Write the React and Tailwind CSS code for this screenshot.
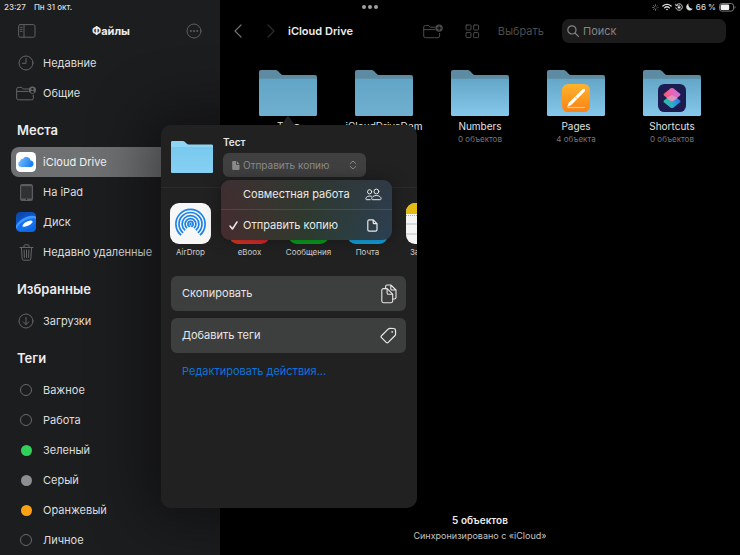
import React from "react";

const line = {
  fill: "none",
  stroke: "currentColor",
  strokeLinecap: "round",
  strokeLinejoin: "round",
  "aria-hidden": true,
};

function SidebarIcon() {
  return (
    <svg {...line} width="18" height="14" viewBox="0 0 18 14">
      <rect x="0.6" y="0.6" width="16.4" height="12.6" rx="1.600" />
      <path d="M6 0.6v12.6M2.200 3.300h2M2.200 5.300h2M2.200 7.300h2" />
    </svg>
  );
}

function MoreIcon() {
  return (
    <svg {...line} width="16" height="16" viewBox="0 0 16 16">
      <circle cx="8" cy="8" r="7" />
      <g fill="currentColor" stroke="none">
        <circle cx="4.8" cy="8" r="1" />
        <circle cx="8" cy="8" r="1" />
        <circle cx="11.2" cy="8" r="1" />
      </g>
    </svg>
  );
}

function ClockIcon() {
  return (
    <svg {...line} width="16" height="16" viewBox="0 0 16 16">
      <circle cx="8" cy="8" r="7" />
      <path d="M8 3.400V8.300H4.400" />
    </svg>
  );
}

function SharedFolderIcon() {
  return (
    <svg {...line} width="20" height="15" viewBox="0 0 20 15">
      <path d="M12.500 3H7.300L5.800 1.400H2.200A1.500 1.500 0 0 0 .7 2.900v9.300a1.600 1.600 0 0 0 1.600 1.600h13.400a1.600 1.600 0 0 0 1.600-1.600V9M.7 5.400h11.600" />
      <circle cx="16.400" cy="4.100" r="3.600" fill="currentColor" stroke="none" />
      <circle cx="16.400" cy="3.100" r="1.200" fill="#1c1d1f" stroke="none" />
      <path d="M14.300 6.100a2.200 1.600 0 0 1 4.200 0 3 3 0 0 1-4.200 0z" fill="#1c1d1f" stroke="none" />
    </svg>
  );
}

function CloudTile() {
  return (
    <svg width="20" height="20" viewBox="0 0 20 20" aria-hidden="true">
      <defs>
        <linearGradient id="cloud" x1="0" y1="0" x2="1" y2="0.3">
          <stop offset="0" stopColor="#7cc5fb" />
          <stop offset="1" stopColor="#1c7ff0" />
        </linearGradient>
      </defs>
      <rect width="20" height="20" rx="4.5" fill="#fff" />
      <path
        d="M5 15a3 3 0 0 1-.9-5.800A2.600 2.600 0 0 1 7 6.700 4.200 4.200 0 0 1 14.600 8.500 3.300 3.300 0 0 1 15 15z"
        fill="url(#cloud)"
      />
    </svg>
  );
}

function TabletIcon() {
  return (
    <svg width="13" height="17" viewBox="0 0 13 17" aria-hidden="true">
      <rect x="0.6" y="0.6" width="11.8" height="15.8" rx="1.6" fill="#303132" stroke="#5c5d5f" strokeWidth="1.2" />
      <path d="M1 1.500h11M1 15.300h11" stroke="#5c5d5f" strokeWidth="1.4" />
      <circle cx="6.5" cy="15.2" r="0.7" fill="#222" />
    </svg>
  );
}

function DiskTile() {
  return (
    <svg width="20" height="20" viewBox="0 0 20 20" aria-hidden="true">
      <defs>
        <linearGradient id="disk" x1="0" y1="0" x2="0.6" y2="1">
          <stop offset="0" stopColor="#0a44a8" />
          <stop offset="1" stopColor="#0b6ae6" />
        </linearGradient>
        <clipPath id="diskClip">
          <rect width="20" height="20" rx="4.500" />
        </clipPath>
      </defs>
      <g clipPath="url(#diskClip)">
        <rect width="20" height="20" fill="url(#disk)" />
        <ellipse cx="10.500" cy="11" rx="11.500" ry="5.600" transform="rotate(-27 10.500 11)" fill="#3f97ff" />
        <ellipse cx="11" cy="12.600" rx="11" ry="4.600" transform="rotate(-27 11 12.600)" fill="#1670ee" />
        <ellipse cx="11.500" cy="11.700" rx="5.600" ry="2.100" transform="rotate(-27 11.500 11.700)" fill="#fff" />
      </g>
    </svg>
  );
}

function TrashIcon() {
  return (
    <svg {...line} width="15" height="17" viewBox="0 0 15 17">
      <path d="M1 3.500h13M5 3.300V1.800a1 1 0 0 1 1-1h3a1 1 0 0 1 1 1v1.500M2.400 3.700l.8 11.200a1.400 1.400 0 0 0 1.400 1.300h5.800a1.400 1.400 0 0 0 1.400-1.300l.8-11.200M5.100 6l.3 7.500M7.500 6v7.500M9.900 6l-.3 7.500" />
    </svg>
  );
}

function DownloadIcon() {
  return (
    <svg {...line} width="16" height="16" viewBox="0 0 16 16">
      <circle cx="8" cy="8" r="7" />
      <path d="M8 4.300v7.200M5.300 8.900L8 11.600l2.700-2.700" />
    </svg>
  );
}

function NewFolderIcon() {
  return (
    <svg {...line} width="20" height="15" viewBox="0 0 20 15">
      <path d="M12.200 3.200H7.300L5.800 1.600H2.200A1.500 1.500 0 0 0 .7 3.100v9a1.600 1.600 0 0 0 1.600 1.600h12.700a1.600 1.600 0 0 0 1.600-1.600V9.300M.7 5.600h11.400" />
      <circle cx="16.100" cy="4.100" r="3.700" fill="currentColor" stroke="none" />
      <path d="M16.100 2.200v3.800M14.200 4.100h3.800" stroke="#000" />
    </svg>
  );
}

function GridIcon() {
  return (
    <svg {...line} width="15" height="15" viewBox="0 0 15 15">
      <rect x="1" y="1" width="5" height="5" rx="0.800" />
      <rect x="8.600" y="1" width="5" height="5" rx="0.800" />
      <rect x="1" y="8.600" width="5" height="5" rx="0.800" />
      <rect x="8.600" y="8.600" width="5" height="5" rx="0.800" />
    </svg>
  );
}

function Chevron({ d }) {
  return (
    <svg {...line} width="8" height="14" viewBox="0 0 8 14" strokeWidth="1.200">
      <path d={d} />
    </svg>
  );
}

function Folder({ className, id, back, top, bottom }) {
  return (
    <svg className={className} viewBox="0 0 58 46" preserveAspectRatio="none" aria-hidden="true">
      <defs>
        <linearGradient id={id} x1="0" y1="0" x2="0" y2="1">
          <stop offset="0" stopColor={top} />
          <stop offset="1" stopColor={bottom} />
        </linearGradient>
      </defs>
      <path d="M2 0h14.500c1 0 1.700.3 2.400 1l3 3c.7.700 1.300 1 2.300 1H56a2 2 0 0 1 2 2v6H0V2a2 2 0 0 1 2-2z" fill={back} />
      <path d="M0 9.500A1 1 0 0 1 1 8.700h56a1 1 0 0 1 1 .8V44.500a1.500 1.500 0 0 1-1.500 1.500h-55A1.500 1.500 0 0 1 0 44.500z" fill={`url(#${id})`} />
    </svg>
  );
}

function PagesIcon() {
  return (
    <svg width="28" height="28" viewBox="0 0 28 28" aria-hidden="true">
      <defs>
        <linearGradient id="pages" x1="0" y1="0" x2="0" y2="1">
          <stop offset="0" stopColor="#fdb32c" />
          <stop offset="1" stopColor="#fb8217" />
        </linearGradient>
      </defs>
      <rect width="28" height="28" rx="6.300" fill="url(#pages)" />
      <path d="M5.200 23l1.600-4.200L20.300 5.600c1-.9 2-.9 2.500-.4s.4 1.500-.4 2.500L9.200 21z" fill="#fff" />
      <path d="M13 12.600l2.300 2.400" stroke="#fca226" strokeWidth="0.700" />
      <path d="M5.500 23.500h17.500" stroke="#ffc581" strokeWidth="1.200" />
    </svg>
  );
}

function ShortcutsIcon() {
  return (
    <svg width="28" height="28" viewBox="0 0 28 28" aria-hidden="true">
      <defs>
        <linearGradient id="scTop" x1="0" y1="0.700" x2="1" y2="0.300">
          <stop offset="0" stopColor="#f7585b" />
          <stop offset="0.500" stopColor="#ec62b0" />
          <stop offset="1" stopColor="#c274e6" />
        </linearGradient>
        <linearGradient id="scBottom" x1="0" y1="0.600" x2="1" y2="0.400">
          <stop offset="0" stopColor="#2fc1a0" />
          <stop offset="0.500" stopColor="#2eabc9" />
          <stop offset="1" stopColor="#2477f3" />
        </linearGradient>
      </defs>
      <rect width="28" height="28" rx="6.300" fill="#1d1c50" />
      <path d="M12.700 11.300a2.400 2.400 0 0 1 2.600 0l6.500 5a1.300 1.300 0 0 1 0 2.200l-6.500 5.200a2.400 2.400 0 0 1-2.600 0l-6.500-5.200a1.300 1.300 0 0 1 0-2.200z" fill="url(#scBottom)" />
      <path d="M12.700 4.300a2.400 2.400 0 0 1 2.600 0l6.500 5.200a1.300 1.300 0 0 1 0 2.200l-6.500 5.200a2.400 2.400 0 0 1-2.600 0l-6.500-5.200a1.300 1.300 0 0 1 0-2.200z" fill="url(#scTop)" />
      <path d="M14 10.900l5.600 3-4.300 3a2.400 2.400 0 0 1-2.600 0l-4.300-3z" fill="#d5a7c6" opacity="0.750" />
    </svg>
  );
}

function AirDropTile() {
  const arc = (r) => {
    const a = (50 * Math.PI) / 180;
    const dx = r * Math.cos(a);
    const dy = r * Math.sin(a);
    return `M${20.5 - dx} ${21 + dy}A${r} ${r} 0 1 1 ${20.5 + dx} ${21 + dy}`;
  };
  return (
    <svg width="41" height="41" viewBox="0 0 41 41" aria-hidden="true">
      <rect width="41" height="41" rx="9" fill="#f7f7f8" />
      <g fill="none" stroke="#1b83e8" strokeWidth="1.700">
        <path d={arc(14.6)} />
        <path d={arc(11.5)} />
        <path d={arc(8.4)} />
        <path d={arc(5.4)} />
        <circle cx="20.500" cy="21" r="2.600" />
      </g>
      <path d="M20.500 23L29.500 34H11.500z" fill="#f7f7f8" />
      <circle cx="20.500" cy="21" r="1.200" fill="#1b83e8" />
    </svg>
  );
}

function NotesTile() {
  return (
    <svg width="41" height="41" viewBox="0 0 41 41" aria-hidden="true">
      <defs>
        <clipPath id="notesClip">
          <rect width="41" height="41" rx="9" />
        </clipPath>
      </defs>
      <g clipPath="url(#notesClip)">
        <rect width="41" height="41" fill="#f4f4f4" />
        <rect width="41" height="11" fill="#e5ba12" />
        <path d="M0 12.500h41" stroke="#aaa" strokeDasharray="1 1" />
        <path d="M0 21h41M0 31h41" stroke="#bcbcbc" />
      </g>
    </svg>
  );
}

function PeopleIcon() {
  return (
    <svg {...line} width="17" height="13" viewBox="0 0 17 13">
      <circle cx="4.600" cy="3.800" r="2.100" />
      <circle cx="11.400" cy="3.500" r="2.400" />
      <path d="M6.400 8.200C3.300 7.200.8 9 .8 10.800c0 .6.300.9.800.9h3.600M7.600 11.700c-.6 0-.9-.3-.9-.9 0-1.900 2-3.300 4.700-3.300s4.700 1.400 4.700 3.300c0 .6-.3.900-.9.900z" />
    </svg>
  );
}

function DocIcon() {
  return (
    <svg {...line} width="11" height="13" viewBox="0 0 11 13" strokeWidth="1.200">
      <path d="M6.200.8H2.200A1.400 1.400 0 0 0 .8 2.200v8.600a1.400 1.400 0 0 0 1.400 1.400h6.400a1.400 1.400 0 0 0 1.400-1.400V4.700zM6.200.8v2.900a1 1 0 0 0 1 1H10" />
    </svg>
  );
}

function CopyIcon() {
  return (
    <svg {...line} width="16" height="20" viewBox="0 0 16 20" strokeWidth="1.100">
      <path d="M4.600 4.400V2.600A1.600 1.600 0 0 1 6.200 1h3.600l5.200 5v7.400a1.600 1.600 0 0 1-1.600 1.600h-1.500M9.800 1v3.700A1.300 1.300 0 0 0 11.100 6H15" />
      <path d="M6.100 4.600H2.400A1.600 1.600 0 0 0 .8 6.200v10.900a1.600 1.600 0 0 0 1.600 1.600h7.700a1.600 1.600 0 0 0 1.600-1.600V10.200zM6.100 4.600v4.300a1.300 1.300 0 0 0 1.300 1.300h4.300z" />
    </svg>
  );
}

function TagIcon() {
  return (
    <svg {...line} width="17" height="17" viewBox="0 0 18 18" strokeWidth="1.300">
      <path d="M1.600 9.300l7-7c.6-.6 1.200-.8 2-.8l3.900.1c1.300 0 1.900.7 1.900 1.900l.1 3.900c0 .8-.3 1.400-.8 1.900l-7 7c-.7.700-1.400.7-2.100 0l-5-5c-.7-.7-.7-1.400 0-2z" />
      <circle cx="12.900" cy="5.200" r="0.900" fill="currentColor" stroke="none" />
    </svg>
  );
}

function Row({ icon, label, active }) {
  return (
    <li>
      <button
        type="button"
        className={
          active
            ? "flex h-[30px] w-full items-center gap-0.5 rounded-lg bg-[#6f7071] text-left text-[#f2f2f2]"
            : "flex h-[30px] w-full items-center gap-0.5 text-left text-[#dededf]"
        }
      >
        <span className="flex w-[30px] shrink-0 justify-center text-[#646567]">{icon}</span>
        <span className="whitespace-nowrap">{label}</span>
      </button>
    </li>
  );
}

function Ring() {
  return <span className="block size-3 rounded-full border border-[#68696b]" />;
}

function Section({ title, children }) {
  return (
    <section>
      <h2 className="flex h-[39px] items-center pt-1.5 pl-1.5 text-[13px] font-semibold text-[#ececed]">{title}</h2>
      <ul>{children}</ul>
    </section>
  );
}

function StatusBar() {
  return (
    <header className="absolute inset-x-0 top-0 z-10 grid h-3.5 grid-cols-3 items-center pr-1 pl-1 text-[8px] font-medium text-[#dcdcdc]">
      <div className="flex gap-2">
        <span>23:27</span>
        <span>Пн 31 окт.</span>
      </div>
      <div className="flex justify-center gap-0.5">
        <span className="size-1 rounded-full bg-[#a0a0a0]" />
        <span className="size-1 rounded-full bg-[#a0a0a0]" />
        <span className="size-1 rounded-full bg-[#a0a0a0]" />
      </div>
      <div className="flex items-center justify-end gap-[3px]">
        <svg {...line} width="7" height="7" viewBox="0 0 8 8" strokeWidth="0.900">
          <path d="M4 .7v1.500M4 5.800v1.500M.7 4h1.500M1.700 1.700l1 1M1.700 6.300l1-1" opacity="0.600" />
          <path d="M5.800 4h1.500M6.300 1.700l-1 1M6.300 6.300l-1-1" opacity="0.350" />
        </svg>
        <svg {...line} width="10" height="8" viewBox="0 0 10 8" strokeWidth="1.300">
          <path d="M.9 3a5.900 5.900 0 0 1 8.200 0M2.600 4.900a3.500 3.500 0 0 1 4.800 0" />
          <path d="M5 7.500L3.900 6.300a1.600 1.600 0 0 1 2.200 0z" fill="currentColor" stroke="none" />
        </svg>
        <svg {...line} width="8" height="8" viewBox="0 0 8 8" strokeWidth="0.900">
          <path d="M1.200 2.300A3.300 3.300 0 1 1 .8 4.800M.7 1.200l.4 1.500 1.400-.4" />
          <rect x="2.700" y="3.600" width="2.800" height="2" rx="0.300" fill="currentColor" stroke="none" />
          <path d="M3.300 3.600v-.5a.8.800 0 0 1 1.600 0v.5" strokeWidth="0.600" />
        </svg>
        <svg width="7" height="8" viewBox="0 0 7 8" fill="currentColor" aria-hidden="true">
          <path d="M2.600.5A3.600 3.600 0 1 0 7 5.600 3.900 3.900 0 0 1 2.600.5z" />
        </svg>
        <span className="whitespace-nowrap">66 %</span>
        <svg width="17" height="9" viewBox="0 0 17 9" aria-hidden="true">
          <rect x="0.500" y="0.500" width="14" height="7.600" rx="2.200" fill="none" stroke="#777" />
          <rect x="1.600" y="1.600" width="8.600" height="5.400" rx="1.200" fill="#f2f2f2" />
          <path d="M15.600 3v2.800a1.500 1.500 0 0 0 0-2.800z" fill="#777" />
        </svg>
      </div>
    </header>
  );
}

const folders = [
  { id: "f0", name: "Тест", note: "", top: "#62a5c6", bottom: "#70afcf" },
  { id: "f1", name: "iCloudDriveDem", note: "", top: "#62a5c6", bottom: "#70afcf" },
  { id: "f2", name: "Numbers", note: "0 объектов", top: "#63a6c7", bottom: "#85c8eb" },
  { id: "f3", name: "Pages", note: "4 объекта", top: "#63a6c7", bottom: "#85c8eb", badge: <PagesIcon /> },
  { id: "f4", name: "Shortcuts", note: "0 объектов", top: "#63a6c7", bottom: "#85c8eb", badge: <ShortcutsIcon /> },
];

const apps = [
  { name: "AirDrop", tile: <AirDropTile /> },
  { name: "eBoox", tile: <span className="size-[41px] rounded-[9px] bg-linear-to-r from-[#d93a20] to-[#d3232f]" /> },
  { name: "Сообщения", tile: <span className="size-[41px] rounded-[9px] bg-[#0a9d1c]" /> },
  { name: "Почта", tile: <span className="size-[41px] rounded-[9px] bg-[#14a3e2]" /> },
  { name: "Заметки", tile: <NotesTile /> },
];

function SharePopover() {
  return (
    <div
      role="dialog"
      aria-label="Тест"
      className="absolute top-[125px] left-[161px] z-20 h-[383px] w-64 rounded-[10px] bg-[#212121]"
    >
      <svg className="absolute -top-[9px] left-[118px]" width="18" height="9" viewBox="0 0 18 9" aria-hidden="true">
        <path d="M0 9C3 9 4.500 6 7.500 1.200c1-1.400 2-1.400 3 0C13.500 6 15 9 18 9z" fill="#212121" />
      </svg>

      <div className="flex h-[63px] gap-2.5 border-b border-[#2b2b2b] pt-2.5 pl-2.5">
        <Folder className="mt-1.5 h-8 w-[42px] shrink-0" id="share" back="#8cd5f5" top="#79c9ef" bottom="#86d0f3" />
        <div className="flex flex-col gap-1">
          <h3 className="text-[10px] leading-[14px] font-semibold text-[#e8e8e8]">Тест</h3>
          <label className="relative flex items-center text-[#8b8b8b]">
            <svg className="absolute left-[9px]" width="8" height="9" viewBox="0 0 8 9" fill="currentColor" aria-hidden="true">
              <path d="M1.200 0H4v3.200c0 .4.200.600.600.600H7.500V8a1 1 0 0 1-1 1H1.200a1 1 0 0 1-1-1V1a1 1 0 0 1 1-1zM4.800.1l2.600 2.800H4.800z" />
            </svg>
            <select
              aria-label="Способ отправки"
              defaultValue="copy"
              className="h-6 w-[143px] appearance-none rounded-md bg-[#404040] pl-5 text-[10px]"
            >
              <option value="copy">Отправить копию</option>
              <option value="collab">Совместная работа</option>
            </select>
            <svg {...line} className="absolute right-[9px]" width="8" height="10" viewBox="0 0 8 10">
              <path d="M1.200 3.600L4 1l2.800 2.600M1.200 6.400L4 9l2.800-2.600" />
            </svg>
          </label>
        </div>
      </div>

      <ul className="flex h-[88px] overflow-x-auto overflow-y-hidden pt-[15px] [scrollbar-width:none]">
        {apps.map((app) => (
          <li key={app.name} className="w-[59px] shrink-0">
            <button type="button" className="flex w-full flex-col items-center gap-0.5 text-[8px] leading-3 text-[#cfcfcf]">
              {app.tile}
              {app.name}
            </button>
          </li>
        ))}
      </ul>

      <div className="flex flex-col items-start gap-[7px] pr-[11px] pl-2.5 text-[11px] text-[#e6e6e6]">
        <button type="button" className="flex h-[35px] w-full items-center justify-between rounded-md bg-[#3d3e3e] pr-[9px] pl-[11px]">
          Скопировать
          <CopyIcon />
        </button>
        <button type="button" className="flex h-[35px] w-full items-center justify-between rounded-md bg-[#3d3e3e] pr-[9px] pl-[11px]">
          Добавить теги
          <TagIcon />
        </button>
        <button type="button" className="flex h-[22px] items-center pl-[11px] text-[#0a74dc]">
          Редактировать действия...
        </button>
      </div>

      <div
        role="menu"
        className="absolute top-[55px] left-[60px] w-[171px] overflow-hidden rounded-[9px] bg-linear-to-r from-[#472b2e] via-[#2c3b2d] to-[#2b4054] text-[11px] text-[#e9e9e9] shadow-[0_0_16px_rgba(0,0,0,0.35)]"
      >
        <div className="bg-linear-to-b from-[#33333580] to-transparent">
          <button type="button" role="menuitem" className="flex h-[30px] w-full items-center border-b border-[#ffffff1c] pr-2.5 pl-[22px]">
            <span className="flex-1 text-left">Совместная работа</span>
            <PeopleIcon />
          </button>
          <button type="button" role="menuitem" className="flex h-[30px] w-full items-center pr-3.5 pl-2">
            <svg {...line} width="9" height="9" viewBox="0 0 9 9" strokeWidth="1.500">
              <path d="M1 5l2.400 3L8 1" />
            </svg>
            <span className="flex-1 pl-[5px] text-left">Отправить копию</span>
            <DocIcon />
          </button>
        </div>
      </div>
    </div>
  );
}

export default function App() {
  return (
    <div className="relative flex min-h-screen overflow-hidden bg-black font-[Inter,'Noto_Sans',sans-serif] text-[11px]">
      <StatusBar />

      <aside className="relative w-[220px] shrink-0 overflow-hidden bg-[#1c1d1f] pt-4">
        <div className="flex h-[30px] items-center justify-between px-[18px] text-[#5f6062]">
          <button type="button" aria-label="Боковая панель">
            <SidebarIcon />
          </button>
          <h1 className="font-bold text-[#ececed]">Файлы</h1>
          <button type="button" aria-label="Ещё">
            <MoreIcon />
          </button>
        </div>
        <nav className="pt-0.5 pr-2.5 pl-[11px]">
          <ul>
            <Row icon={<ClockIcon />} label="Недавние" />
            <Row icon={<SharedFolderIcon />} label="Общие" />
          </ul>
          <Section title="Места">
            <Row icon={<CloudTile />} label="iCloud Drive" active />
            <Row icon={<TabletIcon />} label="На iPad" />
            <Row icon={<DiskTile />} label="Диск" />
            <Row icon={<TrashIcon />} label="Недавно удаленные" />
          </Section>
          <Section title="Избранные">
            <Row icon={<DownloadIcon />} label="Загрузки" />
          </Section>
          <Section title="Теги">
            <Row icon={<Ring />} label="Важное" />
            <Row icon={<Ring />} label="Работа" />
            <Row icon={<span className="size-[11px] rounded-full bg-[#30d158]" />} label="Зеленый" />
            <Row icon={<span className="size-[11px] rounded-full bg-[#8e8e92]" />} label="Серый" />
            <Row icon={<span className="size-[11px] rounded-full bg-[#ff9f14]" />} label="Оранжевый" />
            <Row icon={<Ring />} label="Личное" />
          </Section>
        </nav>
        <div
          aria-hidden="true"
          className="pointer-events-none absolute top-[125px] left-[161px] h-[383px] w-64 rounded-[10px] shadow-[0_0_60px_14px_rgba(0,0,0,0.45)]"
        />
      </aside>

      <main className="flex min-w-0 flex-1 flex-col pt-4">
        <div className="flex h-[30px] items-center pr-3.5 pl-3.5 text-[#4c4c4c]">
          <button type="button" aria-label="Назад" className="text-[#707070]">
            <Chevron d="M7 1L1 7l6 6" />
          </button>
          <button type="button" aria-label="Вперёд" className="ml-[25px] text-[#2c2c2c]">
            <Chevron d="M1 1l6 6-6 6" />
          </button>
          <h2 className="ml-[13px] font-semibold text-[#ececec]">iCloud Drive</h2>
          <button type="button" aria-label="Новая папка" className="ml-auto">
            <NewFolderIcon />
          </button>
          <button type="button" aria-label="Вид" className="ml-[22px]">
            <GridIcon />
          </button>
          <button type="button" className="ml-[18px]">
            Выбрать
          </button>
          <label className="relative ml-[18px] flex items-center text-[#858585]">
            <svg {...line} className="absolute left-[5px]" width="12" height="12" viewBox="0 0 12 12" strokeWidth="1.200">
              <circle cx="4.900" cy="4.900" r="4.100" />
              <path d="M8 8l3.400 3.400" />
            </svg>
            <input
              type="search"
              aria-label="Поиск"
              placeholder="Поиск"
              className="h-6 w-[164px] rounded-[7px] bg-[#1c1c1d] pl-[21px] outline-none placeholder:text-[#858585]"
            />
          </label>
        </div>

        <ul className="grid grid-cols-5 px-5 pt-[24px]">
          {folders.map((f) => (
            <li key={f.id} className="flex flex-col items-center">
              <div className="relative">
                <Folder className="h-[46px] w-[58px]" id={f.id} back="#5f8ba2" top={f.top} bottom={f.bottom} />
                {f.badge && <span className="absolute top-[14px] left-[15px]">{f.badge}</span>}
              </div>
              <span className="mt-[3px] text-[10px] leading-[14px] text-[#e2e2e2]">{f.name}</span>
              <span className="text-[8px] leading-3 text-[#77777a]">{f.note}</span>
            </li>
          ))}
        </ul>

        <footer className="mt-auto pb-[11px] text-center">
          <p className="text-[10px] leading-4 font-semibold text-[#ececec]">5 объектов</p>
          <p className="text-[9px] leading-4 text-[#c4c4c4]">Синхронизировано с «iCloud»</p>
        </footer>
      </main>

      <SharePopover />
    </div>
  );
}
